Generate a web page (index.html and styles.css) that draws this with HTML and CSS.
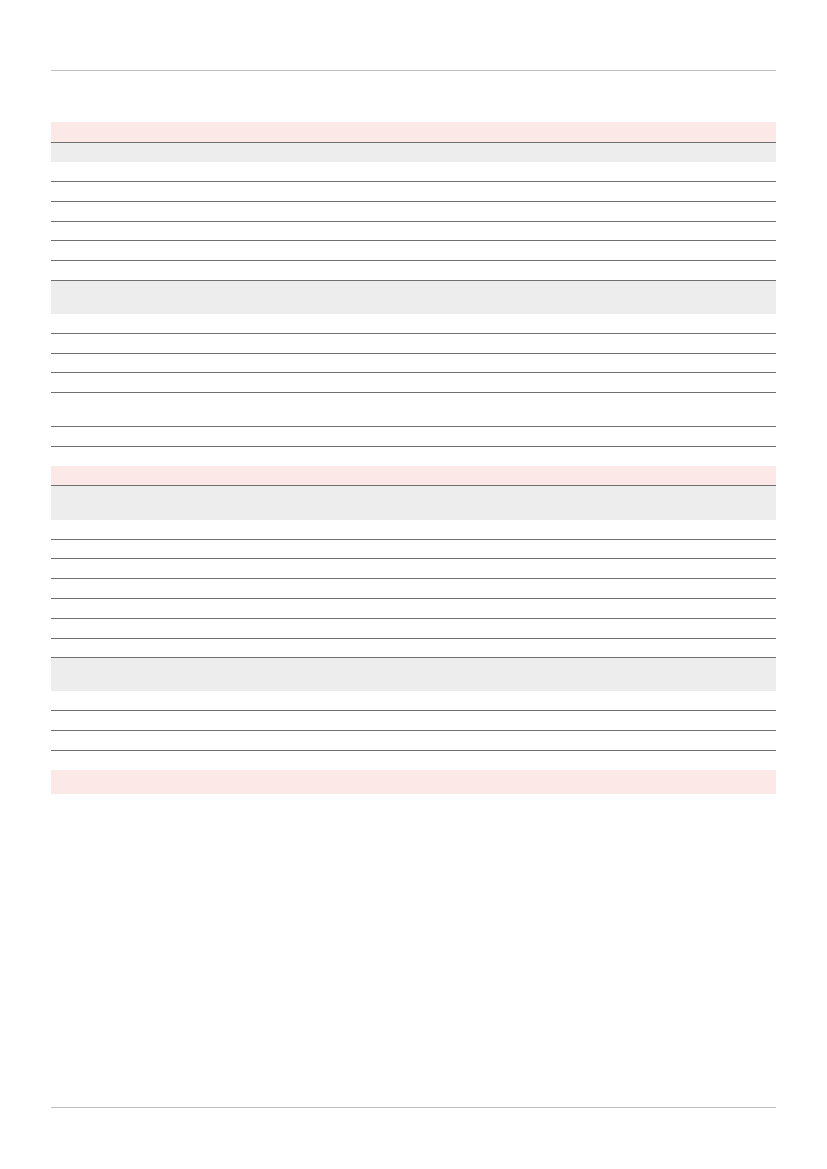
FILE: index.html
```html
<!DOCTYPE html>
<html lang="en">
<head>
<meta charset="utf-8">
<title>Sheet</title>
<link rel="stylesheet" href="styles.css">
</head>
<body>
<div class="page">
  <header class="page-head"></header>
  <main class="content">
    <section class="sheet">
      <div class="sheet-head"></div>
      <div class="group"></div>
      <div class="row"></div>
      <div class="row"></div>
      <div class="row"></div>
      <div class="row"></div>
      <div class="row"></div>
      <div class="row"></div>
      <div class="group group-tall"></div>
      <div class="row"></div>
      <div class="row"></div>
      <div class="row"></div>
      <div class="row"></div>
      <div class="row row-tall"></div>
      <div class="row"></div>
    </section>
    <section class="sheet">
      <div class="sheet-head sheet-head-b"></div>
      <div class="group group-tall group-first"></div>
      <div class="row"></div>
      <div class="row"></div>
      <div class="row"></div>
      <div class="row"></div>
      <div class="row"></div>
      <div class="row"></div>
      <div class="row"></div>
      <div class="group group-tall"></div>
      <div class="row"></div>
      <div class="row"></div>
      <div class="row"></div>
    </section>
    <section class="sheet">
      <div class="sheet-head sheet-head-end"></div>
    </section>
  </main>
  <footer class="page-foot"></footer>
</div>
</body>
</html>
```

FILE: styles.css
```css
* { box-sizing: border-box; }
html, body { margin: 0; padding: 0; background: #ffffff; }
body { font-family: "Liberation Sans", Arial, sans-serif; font-size: 12px; color: #222; }

.page {
  min-height: 1169px;
  padding: 0 51px;
  display: flex;
  flex-direction: column;
}
.page-head {
  height: 71px;
  border-bottom: 1px solid #c0c0c0;
}
.content {
  padding-top: 51px;
  display: flex;
  flex-direction: column;
  gap: 19.5px;
}
.sheet { display: flex; flex-direction: column; }
.sheet-head {
  height: 21.2px;
  background: #fde8e8;
  border-bottom: 1px solid #707070;
}
.sheet-head-b { height: 20px; }
.sheet-head-end { height: 24px; border-bottom: none; }
.group { height: 19px; background: #ededed; }
.group-tall { height: 33px; }
.group-first { height: 33.5px; }
.row {
  height: 19.8px;
  border-bottom: 1px solid #707070;
}
.row-tall { height: 33.8px; }
.page-foot {
  margin-top: auto;
  height: 62px;
  border-top: 1px solid #c0c0c0;
}
```
